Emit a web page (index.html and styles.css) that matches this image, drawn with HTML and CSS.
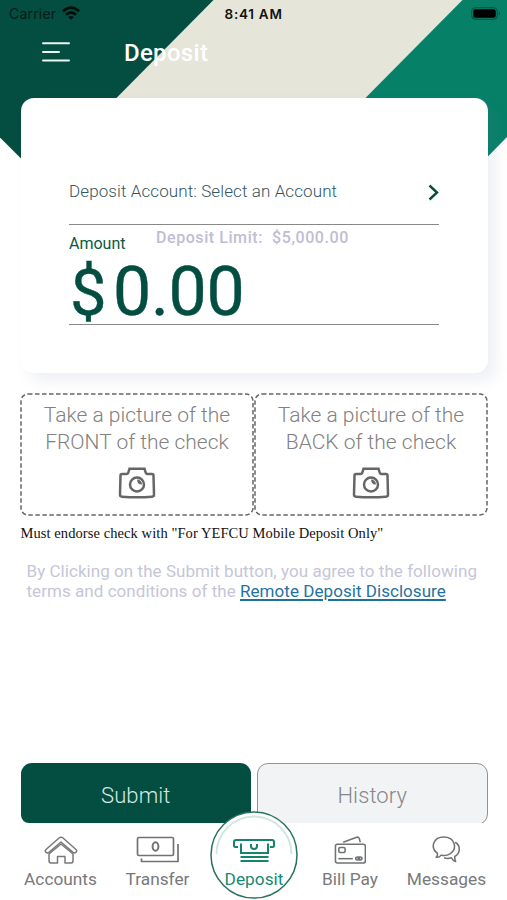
FILE: index.html
```html
<!DOCTYPE html>
<html lang="en">
<head>
<meta charset="utf-8">
<title>Deposit</title>
<link rel="stylesheet" href="styles.css">
</head>
<body>
<div class="screen">
  <svg class="backdrop" viewBox="0 0 507 170" aria-hidden="true">
    <path fill="#e5e5d9" d="M213 0H463L365 99V150H60V150Z"/>
    <path fill="#034e40" d="M0 0H213.500L55 160H22.500L0 137.500Z"/>
    <path fill="#068168" d="M462.500 0H507V137L484.500 160H304Z"/>
  </svg>
  <div class="status">
    <span class="carrier">Carrier</span>
    <svg class="wifi" viewBox="0 0 18 14"><g fill="none" stroke="#070d0b" stroke-width="2.800"><path d="M1 5.200Q9-2 17 5.200M4 8.700Q9 4.200 14 8.700"/></g><path fill="#070d0b" d="M6.200 11Q9 8.800 11.800 11L9 13.800Z"/></svg>
    <span class="clock">8:41 AM</span>
    <svg class="battery" viewBox="0 0 30 13"><rect x=".7" y=".7" width="25.600" height="11.600" rx="3.500" fill="none" stroke="#06493b"/><rect x="2.300" y="2.300" width="22.400" height="8.400" rx="1.800"/><path d="M28 4.500Q30 6.500 28 8.500Z" fill="#06493b"/></svg>
  </div>
  <header class="header">
    <svg class="menu" viewBox="0 0 28 20"><path d="M1 1.200H27M1 10H17M1 18.500H27" stroke="#e8f5f1" stroke-width="2" stroke-linecap="round"/></svg>
    <h1>Deposit</h1>
  </header>
  <section class="card">
    <div class="account"><span>Deposit Account: Select an Account</span>
      <svg class="chevron" viewBox="0 0 11 17"><path d="M1.500 1.500L9 8.500L1.500 15.500" fill="none" stroke="#045039" stroke-width="2.400"/></svg>
    </div>
    <div class="labels"><span class="amount-label">Amount</span><span class="limit">Deposit Limit:&nbsp; $5,000.00</span></div>
    <div class="amount"><span class="currency">$</span><span>0.00</span></div>
  </section>
  <section class="photos">
    <button class="photo"><svg class="dash" viewBox="0 0 234 123"><rect x="1" y="1" width="232" height="121" rx="7"/></svg>
      <span class="line">Take a picture of the</span><span class="line">FRONT of the check</span>
      <svg class="camera" viewBox="0 0 38 32"><path d="M2.500 8.500Q2.500 7 4 7H8.500Q10 7 10.500 5L11.500 1.800H26.500L27.500 5Q28 7 29.500 7H34Q35.500 7 35.500 8.500L36 27.500Q36 29.500 34 29.700Q19 31 4 29.700Q2 29.500 2 27.500Z"/><circle cx="19" cy="17.500" r="7"/><path class="lens" d="M19 12.500A5 5 0 0 1 24 17.500Q19.500 18 19 12.500Z"/></svg>
    </button>
    <button class="photo"><svg class="dash" viewBox="0 0 234 123"><rect x="1" y="1" width="232" height="121" rx="7"/></svg>
      <span class="line">Take a picture of the</span><span class="line">BACK of the check</span>
      <svg class="camera" viewBox="0 0 38 32"><path d="M2.500 8.500Q2.500 7 4 7H8.500Q10 7 10.500 5L11.500 1.800H26.500L27.500 5Q28 7 29.500 7H34Q35.500 7 35.500 8.500L36 27.500Q36 29.500 34 29.700Q19 31 4 29.700Q2 29.500 2 27.500Z"/><circle cx="19" cy="17.500" r="7"/><path class="lens" d="M19 12.500A5 5 0 0 1 24 17.500Q19.500 18 19 12.500Z"/></svg>
    </button>
  </section>
  <p class="endorse">Must endorse check with "For YEFCU Mobile Deposit Only"</p>
  <p class="terms">By Clicking on the Submit button, you agree to the following<br>terms and conditions of the <a href="#">Remote Deposit Disclosure</a></p>
  <div class="actions">
    <button class="submit">Submit</button>
    <button class="history">History</button>
  </div>
  <nav class="tabs">
    <a class="tab accounts"><svg viewBox="0 0 34 28"><g fill="none" stroke="#77797b" stroke-width="1.500" stroke-linejoin="round"><path d="M17 1.200Q18 1.200 19 2L32 13.500Q33.500 15 32 16.300T29 16.400L17 6L5 16.400Q3.500 17.500 2 16.300T2 13.500L15 2Q16 1.200 17 1.200Z"/><path d="M5 18L17 8L29 18V24.500Q29 27 27 27H21V20.500H13.500V27H7Q5 27 5 24.500Z"/></g></svg><span>Accounts</span></a>
    <a class="tab transfer"><svg viewBox="0 0 44 28"><g fill="none" stroke="#707274" stroke-width="1.700" stroke-linejoin="round"><rect x="1.500" y="1.500" width="36" height="18" rx="1.500"/><path d="M42 8V25.500H5.500V22.500"/><ellipse cx="19.500" cy="10.500" rx="2.900" ry="4.200" stroke-width="2"/></g></svg><span>Transfer</span></a>
    <a class="tab deposit">
      <svg class="ring" viewBox="0 0 88 88"><circle cx="44" cy="44" r="43" fill="#fff" stroke="#28725f" stroke-width="1.500"/><path d="M6.500 43A37.500 37.500 0 0 1 81.500 43" fill="none" stroke="#d1e7e2" stroke-width="2"/></svg>
      <svg class="slot" viewBox="0 0 42 24"><g fill="none" stroke="#16836b" stroke-width="2"><path d="M5 8H2.500Q1 8 1 6.500V3Q1 1 3 1H39Q41 1 41 3V6.500Q41 8 39.500 8H37"/><path d="M8 4.500V14H35V4.500M18 5V7Q18 10 21 10T24 7V5M7.500 18H35.500M7.500 22H35.500"/></g></svg><span>Deposit</span></a>
    <a class="tab bill"><svg viewBox="0 0 34 29"><g fill="none" stroke="#707274" stroke-width="1.600" stroke-linejoin="round"><rect x="1.500" y="8.500" width="31" height="19.500" rx="2"/><path d="M9.500 6.500L23.500 1.300Q25.500.8 26.200 2.500L27.200 6.500"/><rect x="5" y="12" width="6.500" height="5" rx="1.200"/><path d="M4.500 23.500H19.500"/><ellipse cx="24.500" cy="23.300" rx="2" ry="1.500"/><ellipse cx="27" cy="23.300" rx="2" ry="1.500"/></g></svg><span>Bill Pay</span></a>
    <a class="tab messages"><svg viewBox="0 0 30 29"><g fill="none" stroke="#707274" stroke-width="1.600" stroke-linejoin="round"><path d="M5.500 17.800C-2.500 11.500 2 1 12 1C24 1 26.500 13 19 18.200Q14.500 21.300 9.500 19.800Q7.500 22.500 4.300 22Q6.200 20.500 5.500 17.800Z"/><path d="M24 6.500C30 10 29.500 18 23.500 21.200Q23.500 24.500 24.500 26.500Q21.500 25.500 20 22.500Q16 24 12.500 22.500"/></g></svg><span>Messages</span></a>
  </nav>
</div>
</body>
</html>
```
FILE: styles.css
```css
* { box-sizing: border-box; }
body { margin: 0; background: #fff; font-family: Roboto, sans-serif; }
h1, p { margin: 0; }
svg { display: block; flex: none; }
button { font: inherit; padding: 0; border: 0; background: none; }
.screen { position: relative; isolation: isolate; width: 507px; height: 900px; overflow: hidden; display: flex; flex-direction: column; white-space: nowrap; }
.backdrop { position: absolute; z-index: -1; top: 0; left: 0; width: 507px; height: 170px; }
.status { height: 28px; display: flex; align-items: center; padding: 0 6px 0 9px; font: 14px/28px Inter, sans-serif; color: #071a15; }
.carrier { width: 47px; letter-spacing: .2px; }
.wifi { width: 18px; height: 14px; margin-left: 6px; margin-top: -2px; }
.clock { margin-left: 144.500px; font-weight: 600; font-size: 13.500px; letter-spacing: .8px; letter-spacing: .75px; color: #111; }
.battery { width: 30px; height: 13px; margin-left: auto; margin-top: -2px; }
.header { height: 70px; display: flex; padding-left: 42px; color: #fff; }
.menu { width: 28px; height: 20px; margin-top: 14px; }
.header h1 { margin: 11px 0 0 54px; font: 500 24px/28px Roboto, sans-serif; letter-spacing: .3px; }
.card { flex: none; width: 467px; height: 275px; margin: 0 0 0 20.500px; padding: 71px 49px 0 48.500px; background: #fff; border-radius: 13px; box-shadow: 8px 8px 14px rgba(110,115,165,.11); }
.account { height: 56px; display: flex; justify-content: space-between; border-bottom: 1.500px solid #888; font-size: 17px; line-height: 45px; letter-spacing: .1px; font-weight: 300; color: #34575e; }
.chevron { width: 11px; height: 17px; margin-top: 15px; }
.labels { display: flex; height: 30px; }
.amount-label { width: 87px; font-size: 16px; line-height: 37px; color: #075a43; }
.limit { font-size: 16px; line-height: 26px; font-weight: 500; color: #bfbdd3; letter-spacing: .57px; }
.amount { height: 70px; display: flex; border-bottom: 1.500px solid #888; font-size: 68px; line-height: 74px; letter-spacing: -.3px; color: #034e40; -webkit-text-stroke: .4px; }
.currency { width: 44px; padding-left: 1px; font-size: 65px; line-height: 76px; }
.photos { flex: none; display: flex; height: 123px; margin: 20px 0 0 20px; }
.photo { position: relative; width: 234px; height: 123px; color: #818181; font-size: 21px; font-weight: 300; line-height: 27px; display: flex; flex-direction: column; align-items: center; padding-top: 9px; }
.dash { position: absolute; inset: 0; width: 234px; height: 123px; }
.dash rect { fill: none; stroke: #666; stroke-width: 1.500; stroke-dasharray: 4.500 2.500; }
.camera { width: 38px; height: 32px; margin-top: 11px; fill: none; stroke: #666; stroke-width: 2.500; }
.camera .lens { fill: #666; stroke: none; }
.endorse { margin: 7px 0 0 20.500px; font: 14.500px/20px "Liberation Serif", serif; letter-spacing: .08px; color: #111; }
.terms { margin: 18px 0 0 26.500px; font-size: 17px; line-height: 20px; letter-spacing: .05px; color: #c5c6d8; }
.terms a { color: #1f729f; text-decoration-thickness: 1.500px; text-underline-offset: 2px; }
.actions { position: absolute; top: 763px; left: 20.500px; display: flex; gap: 6px; height: 60px; overflow: hidden; }
.submit, .history { width: 230.500px; height: 62px; border-radius: 11px; font-size: 22px; letter-spacing: .1px; font-weight: 300; line-height: 66px; }
.submit { background: #034e40; color: #d4e9e4; height: 60px; border-radius: 11px 11px 0 8px; }
.history { background: #f1f3f5; color: #858789; border: 1.500px solid #929292; line-height: 64px; }
.tabs { position: absolute; top: 823px; left: 12px; width: 483px; height: 77px; display: grid; grid-template-columns: 97px 97px 96px 96px 97px; color: #77797b; font-size: 17.300px; }
.tab { position: relative; display: flex; flex-direction: column; align-items: center; padding-top: 13px; }
.tab span { position: relative; margin-top: auto; margin-bottom: 9px; line-height: 24px; }
.tab > svg { position: relative; height: 28px; width: auto; }
.tab .ring { position: absolute; top: -12px; left: 4px; width: 88px; height: 88px; }
.tab .slot { width: 42px; height: 24px; margin-top: 3px; }
.deposit { color: #188a70; }
```
